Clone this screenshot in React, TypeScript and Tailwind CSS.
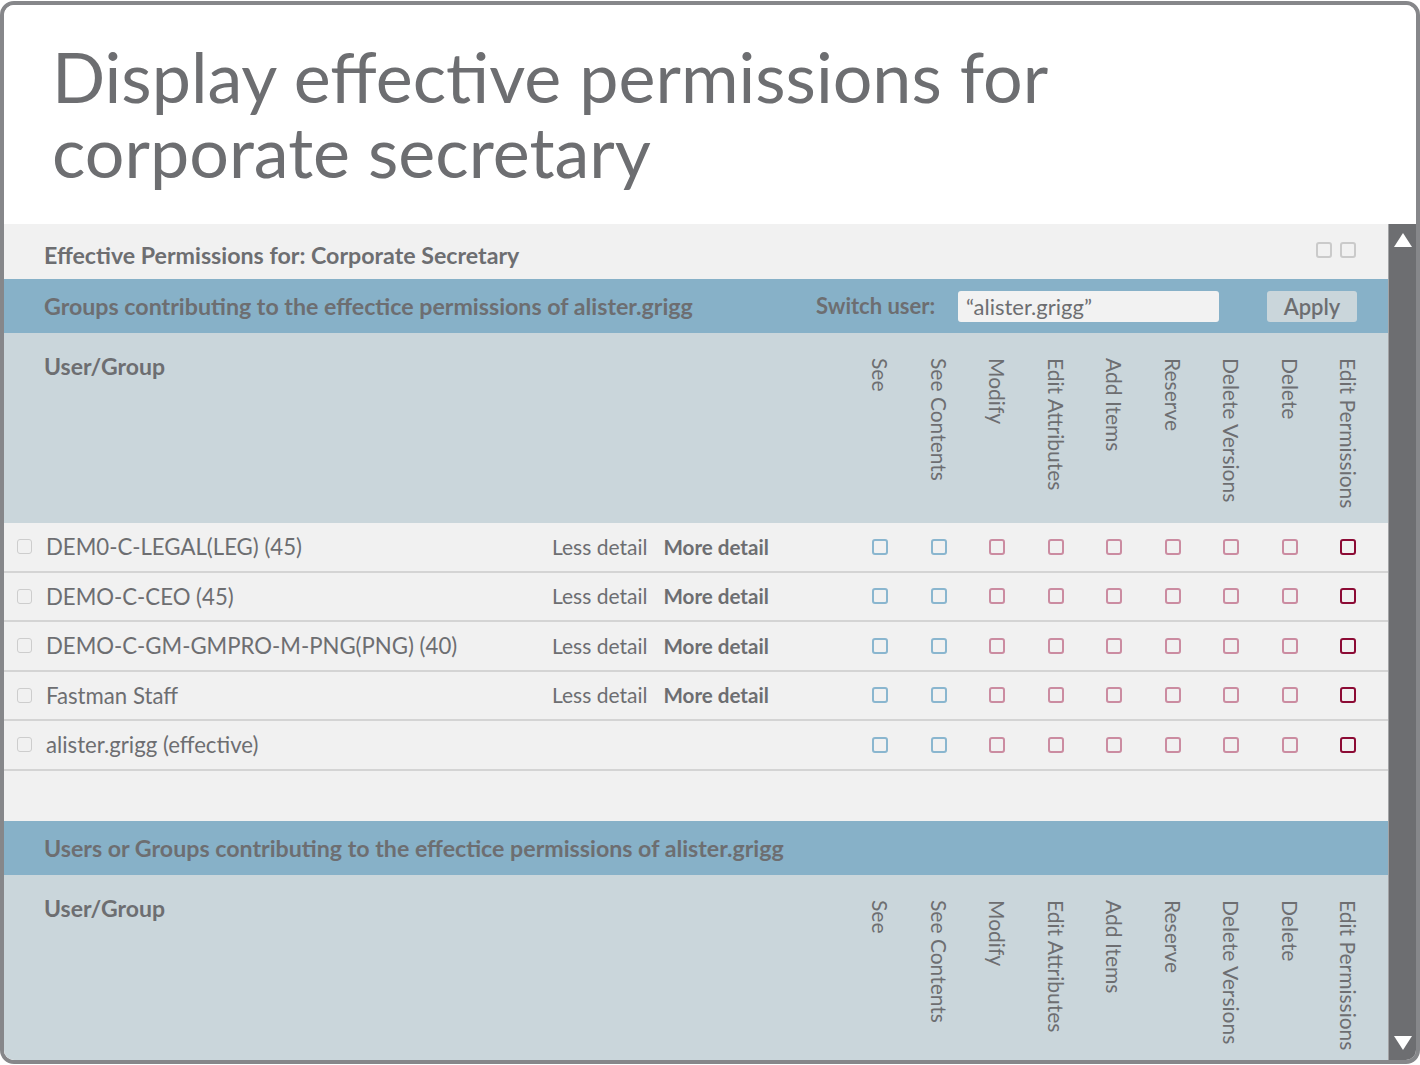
import React from "react";

const COLS = [
  "See",
  "See Contents",
  "Modify",
  "Edit Attributes",
  "Add Items",
  "Reserve",
  "Delete Versions",
  "Delete",
  "Edit Permissions",
];

const ROWS = [
  { name: "DEM0-C-LEGAL(LEG) (45)", detail: true },
  { name: "DEMO-C-CEO (45)", detail: true },
  { name: "DEMO-C-GM-GMPRO-M-PNG(PNG) (40)", detail: true },
  { name: "Fastman Staff", detail: true },
  { name: "alister.grigg (effective)", detail: false },
];

function PermBox({ i }: { i: number }) {
  const cls =
    i < 2
      ? "border-[#8ab6cf]"
      : i < 8
      ? "border-[#cb8ca1]"
      : "border-[#8c0b35]";
  return <div className={`w-[16px] h-[16px] rounded-[3px] border-2 ${cls}`} />;
}

function HeaderBand() {
  return (
    <div className="flex h-[190px] bg-[#cad6db] shrink-0">
      <div className="pl-[40px] pt-[20px] text-[23px] leading-[26px] font-bold text-[#6d6e71]">
        User/Group
      </div>
      <div className="ml-auto mr-[10.5px] flex pt-[25px]">
        {COLS.map((c) => (
          <div key={c} className="w-[58.5px] flex justify-center">
            <div className="[writing-mode:vertical-rl] text-[21px] leading-[24px] text-[#6d6e71] whitespace-nowrap">
              {c}
            </div>
          </div>
        ))}
      </div>
    </div>
  );
}

export default function App() {
  return (
    <div
      className="w-[1420px] h-[1065px] bg-white pt-[1px]"
      style={{ fontFamily: "Lato, 'Open Sans', sans-serif" }}
    >
      <div className="h-[1063px] border-4 border-[#86878a] rounded-[14px] overflow-hidden flex flex-col bg-white">
        <div className="h-[219px] shrink-0 bg-white pl-[48px] pt-[34px]">
          <h1 className="text-[70px] leading-[75px] text-[#6d6e71] font-normal">
            Display effective permissions for
            <br />
            corporate secretary
          </h1>
        </div>
        <div className="flex flex-1 min-h-0">
          <div className="flex-1 flex flex-col overflow-hidden bg-[#f1f1f1]">
            <div className="h-[55px] shrink-0 flex items-center bg-[#f1f1f1] pl-[40px] pr-[32px] pt-[6px]">
              <div className="text-[23.2px] leading-[26px] font-bold text-[#6d6e71]">
                Effective Permissions for: Corporate Secretary
              </div>
              <div className="ml-auto flex gap-[8px] -mt-[10px]">
                <div className="w-[16px] h-[16px] rounded-[3px] border-2 border-[#cacaca]" />
                <div className="w-[16px] h-[16px] rounded-[3px] border-2 border-[#cacaca]" />
              </div>
            </div>
            <div className="h-[54px] shrink-0 flex items-center bg-[#87b1c8] pl-[40px]">
              <div className="w-[772px] text-[23.2px] leading-[26px] font-bold text-[#6d6e71] whitespace-nowrap">
                Groups contributing to the effectice permissions of alister.grigg
              </div>
              <div className="text-[22px] leading-[26px] font-bold text-[#6d6e71] w-[142px]">
                Switch user:
              </div>
              <div className="w-[261px] h-[31px] bg-[#f2f2f2] rounded-[3px] flex items-center pl-[8px] text-[22px] text-[#6d6e71]">
                “alister.grigg”
              </div>
              <div className="ml-[48px] w-[90px] h-[31px] bg-[#cad6db] rounded-[3px] flex items-center justify-center text-[22px] font-semibold text-[#6d6e71]">
                Apply
              </div>
            </div>
            <HeaderBand />
            {ROWS.map((r) => (
              <div
                key={r.name}
                className="h-[49.5px] shrink-0 flex items-center border-b-2 border-[#d4d4d4] bg-[#f1f1f1]"
              >
                <div className="w-[42px] pl-[13px] shrink-0">
                  <div className="w-[15px] h-[15px] rounded-[3px] border-[1.5px] border-[#cdcdcd]" />
                </div>
                <div className="w-[506px] shrink-0 text-[22.2px] text-[#6d6e71] whitespace-nowrap">
                  {r.name}
                </div>
                {r.detail && (
                  <div className="flex items-baseline gap-[16px] text-[21px] text-[#6d6e71] whitespace-nowrap">
                    <span>Less detail</span>
                    <span className="font-bold text-[20.6px]">More detail</span>
                  </div>
                )}
                <div className="ml-auto mr-[10.5px] flex">
                  {COLS.map((c, i) => (
                    <div key={c} className="w-[58.5px] flex justify-center">
                      <PermBox i={i} />
                    </div>
                  ))}
                </div>
              </div>
            ))}
            <div className="h-[50px] shrink-0 bg-[#f1f1f1]" />
            <div className="h-[54px] shrink-0 flex items-center bg-[#87b1c8] pl-[40px]">
              <div className="text-[23.2px] leading-[26px] font-bold text-[#6d6e71] whitespace-nowrap">
                Users or Groups contributing to the effectice permissions of alister.grigg
              </div>
            </div>
            <HeaderBand />
          </div>
          <div className="w-[28px] shrink-0 bg-[#6d6e71] border-l border-[#a3a4a6] flex flex-col items-center justify-between pt-[9px] pb-[10px]">
            <svg width="18" height="14" viewBox="0 0 18 14">
              <polygon points="9,0 18,14 0,14" fill="#ffffff" />
            </svg>
            <svg width="18" height="14" viewBox="0 0 18 14">
              <polygon points="0,0 18,0 9,14" fill="#ffffff" />
            </svg>
          </div>
        </div>
      </div>
    </div>
  );
}
